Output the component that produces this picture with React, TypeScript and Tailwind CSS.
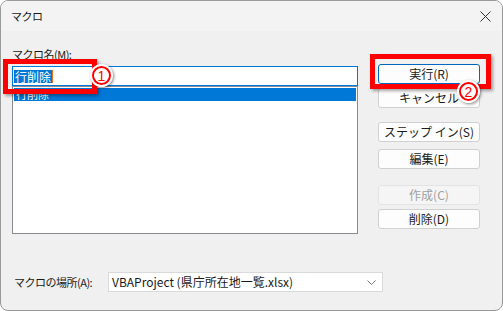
import React from "react";

const font = "font-['Noto_Sans_CJK_JP','Noto_Sans',sans-serif]";

function Btn({ label, def, disabled, className = "" }: { label: string; def?: boolean; disabled?: boolean; className?: string }) {
  return (
    <div
      className={
        "h-[20px] w-[102px] flex items-center justify-center rounded-[3px] text-[12px] leading-none " +
        (disabled
          ? "bg-[#f5f5f5] border border-[#e3e3e3] text-[#a0a0a0] "
          : def
          ? "bg-[#fdfdfd] border border-[#0067c0] text-[#1a1a1a] "
          : "bg-[#fdfdfd] border border-[#d0d0d0] text-[#1a1a1a] ") +
        className
      }
    >
      {label}
    </div>
  );
}

function Num({ n, className }: { n: string; className: string }) {
  return (
    <div
      className={
        "absolute w-[23px] h-[23px] rounded-full bg-white shadow-[1px_1px_3px_rgba(0,0,0,0.45)] flex items-center justify-center " +
        className
      }
    >
      <div className="w-[19px] h-[19px] rounded-full border-[2px] border-[#ff0000] flex items-center justify-center text-[#ff0000] text-[14px] leading-none font-['Liberation_Sans',sans-serif]">
        {n}
      </div>
    </div>
  );
}

export default function App() {
  return (
    <div className={"relative w-[503px] h-[311px] border border-[#9a9a9a] rounded-[8px] overflow-hidden flex flex-col bg-[#f0f0f0] text-[#1a1a1a] " + font}>
      <div className="h-[30px] bg-[#f3f3f3] flex items-center justify-between pl-[10px] pr-[11px] shrink-0">
        <span className="text-[11px] leading-none tracking-[-0.5px]">マクロ</span>
        <svg width="11" height="11" viewBox="0 0 11 11">
          <path d="M0.5 0.5 L10.5 10.5 M10.5 0.5 L0.5 10.5" stroke="#333" strokeWidth="1" />
        </svg>
      </div>
      <div className="flex-1 flex flex-col pl-[11px] pt-[16px]">
        <div className="flex">
          <div className="w-[346px] flex flex-col">
            <div className="h-[14px] text-[11px] leading-[14px] tracking-[-0.5px]">マクロ名(M):</div>
            <div className="mt-[5px] h-[20px] bg-white border border-[#0078d7] flex items-center pl-[1px]">
              <span className="bg-[#0078d7] text-white text-[12px] leading-[13px] px-[1px]">行削除</span>
              <span className="w-[1px] h-[13px] bg-[#e07020]"></span>
            </div>
            <div className="h-[148px] bg-white border border-[#8a8a90] p-[1px]">
              <div className="h-[13px] bg-[#0078d7] text-white text-[11px] leading-[13px] pl-[2px]">行削除</div>
            </div>
          </div>
          <div className="ml-[20px] flex flex-col pt-[17px]">
            <Btn label="実行(R)" def />
            <Btn label="キャンセル" className="mt-[4px]" />
            <Btn label="ステップ イン(S)" className="mt-[14px]" />
            <Btn label="編集(E)" className="mt-[7px]" />
            <Btn label="作成(C)" disabled className="mt-[16px]" />
            <Btn label="削除(D)" className="mt-[4px]" />
          </div>
        </div>
        <div className="flex items-center mt-[38px]">
          <div className="w-[96px] pl-[2px] text-[11px] leading-none tracking-[-0.5px]">マクロの場所(A):</div>
          <div className="w-[275px] h-[20px] bg-white border border-[#d9d9d9] flex items-center justify-between pl-[3px] pr-[6px] text-[12px] leading-none">
            <span>VBAProject (県庁所在地一覧.xlsx)</span>
            <svg width="9" height="5" viewBox="0 0 9 5">
              <path d="M0.5 0.5 L4.5 4.5 L8.5 0.5" fill="none" stroke="#777" strokeWidth="1" />
            </svg>
          </div>
        </div>
      </div>

      <div className="absolute left-[2px] top-[58px] w-[94px] h-[35px] border-[5px] border-[#ff0000] shadow-[2px_2px_3px_rgba(0,0,0,0.35)]"></div>
      <div className="absolute left-[369px] top-[53px] w-[121px] h-[35px] border-[5px] border-[#ff0000] shadow-[2px_2px_3px_rgba(0,0,0,0.35)]"></div>
      <Num n="1" className="left-[89px] top-[63px]" />
      <Num n="2" className="left-[456px] top-[79px]" />
    </div>
  );
}
